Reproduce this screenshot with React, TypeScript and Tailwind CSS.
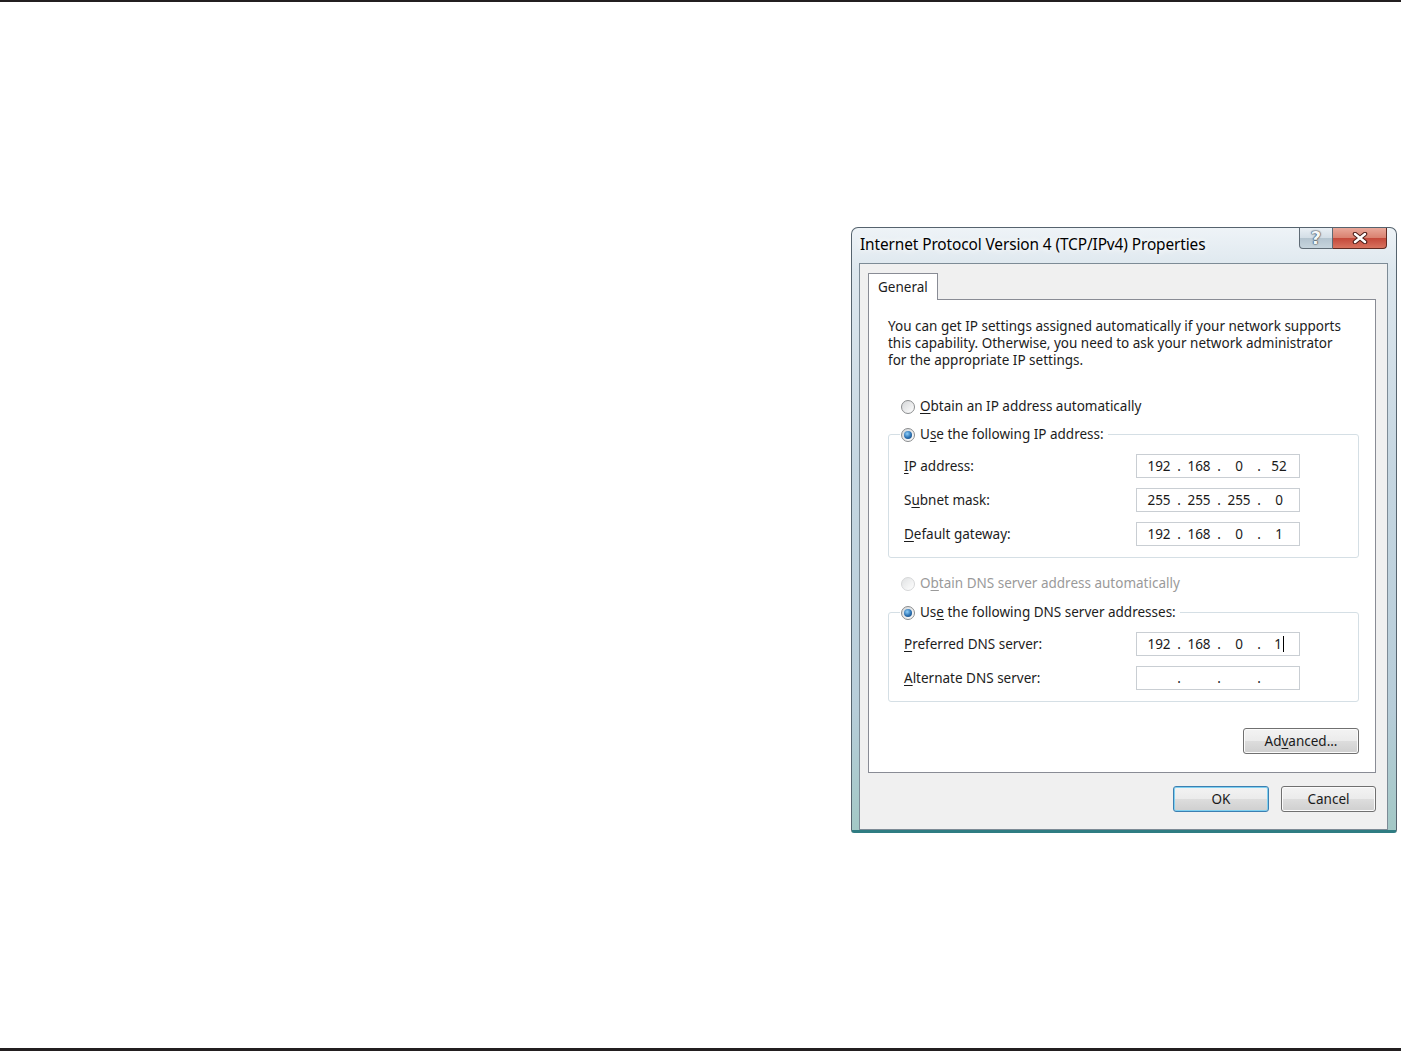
import React from "react";

const Radio = ({ checked, disabled }: { checked?: boolean; disabled?: boolean }) => (
  <span
    className={`flex h-[14px] w-[14px] shrink-0 items-center justify-center rounded-full border bg-[linear-gradient(135deg,#d4d6d8,#ffffff)] ${
      disabled ? "border-[#c4c6c8] opacity-70" : "border-[#8a8c8e]"
    }`}
  >
    {checked && (
      <span className="h-[8px] w-[8px] rounded-full bg-[radial-gradient(circle_at_40%_35%,#8fd0fb,#2a6fb0_55%,#143f6e)]" />
    )}
  </span>
);

const U = ({ children }: { children: React.ReactNode }) => <span className="underline underline-offset-2">{children}</span>;

const IpBox = ({ parts, caret }: { parts: string[]; caret?: boolean }) => (
  <div className="flex h-[24px] w-[164px] items-center border border-[#c9ced3] bg-white pl-[5px] text-[13.5px] text-[#1a1a1a]">
    {parts.map((p, i) => (
      <React.Fragment key={i}>
        <span className="w-[34px] text-center">
          {p}
          {caret && i === 3 && <span className="ml-[1px] inline-block h-[16px] w-px translate-y-[3px] bg-black" />}
        </span>
        {i < 3 && <span className="w-[6px] text-center">.</span>}
      </React.Fragment>
    ))}
  </div>
);

const Row = ({ label, parts, caret }: { label: React.ReactNode; parts: string[]; caret?: boolean }) => (
  <div className="flex h-[24px] items-center">
    <span className="w-[247px] pl-[15px] text-[13.5px]">{label}</span>
    <IpBox parts={parts} caret={caret} />
  </div>
);

const VistaButton = ({ children, primary, w }: { children: React.ReactNode; primary?: boolean; w: string }) => (
  <button
    className={`${w} relative h-[26px] overflow-hidden rounded-[3px] border text-[13.5px] text-[#1a1a1a] ${
      primary ? "border-[#3c7fb1] shadow-[inset_0_0_0_1px_#7fd0f0]" : "border-[#707070] shadow-[inset_0_0_0_1px_#fbfbfb]"
    } bg-[linear-gradient(180deg,#f3f3f3_0%,#ebebeb_49%,#dddddd_50%,#cfcfcf_100%)]`}
  >
    {children}
  </button>
);

export default function App() {
  return (
    <div className="flex h-[1051px] w-full flex-col bg-white font-['Noto_Sans',sans-serif] text-[#1c1c1c]">
      <div className="h-[2px] w-full bg-[#231f20]" />

      <div className="ml-[851px] mt-[225px] flex h-[606px] w-[546px] flex-col rounded-t-[7px] rounded-b-[3px] border border-[#55636e] border-b-[3px] border-b-[#2f7c82] bg-[linear-gradient(180deg,#eef3f7_0%,#dde7ee_7%,#c5d6e1_40%,#b7cdd9_80%,#a3c8c6_100%)]">
        {/* title bar */}
        <div className="flex h-[35px] items-start justify-between">
          <span className="pl-[8px] pt-[5px] text-[15.4px] tracking-[-0.1px] text-black [text-shadow:0_0_6px_#ffffff,0_0_10px_#ffffff]">
            Internet Protocol Version 4 (TCP/IPv4) Properties
          </span>
          <div className="mr-[9px] flex">
            <div className="flex h-[21px] w-[34px] items-center justify-center rounded-bl-[4px] border border-t-0 border-[#5f6b75] bg-[linear-gradient(180deg,#e9eff4_0%,#d2dde5_50%,#b4c4cf_51%,#c6d4dd_100%)] font-['DejaVu_Sans',sans-serif] text-[18px] leading-none font-bold text-[#f4f7f9] [text-shadow:0_0_1px_#3a4650,0_0_1px_#3a4650,0_0_2px_#3a4650]">
              ?
            </div>
            <div className="flex h-[21px] w-[54px] items-center justify-center rounded-br-[4px] border border-l-0 border-t-0 border-[#5f2a22] bg-[linear-gradient(180deg,#e9a89a_0%,#d9806f_50%,#c4483a_51%,#d8735f_100%)]">
              <svg width="16" height="12" viewBox="0 0 16 12">
                <path d="M3 2 L13 10 M13 2 L3 10" stroke="#4a1d18" strokeWidth="4.5" strokeLinecap="round" />
                <path d="M3 2 L13 10 M13 2 L3 10" stroke="#ffffff" strokeWidth="2.5" strokeLinecap="round" />
              </svg>
            </div>
          </div>
        </div>

        {/* client area */}
        <div className="ml-[7px] mr-[8px] flex flex-1 flex-col border border-[#7d8b96] bg-[#f0f0f0]">
          {/* tab strip */}
          <div className="ml-[8px] mt-[9px] flex">
            <div className="relative z-10 -mb-px flex h-[27px] w-[70px] items-center border border-b-0 border-[#898c95] bg-white pl-[9px] text-[13.5px]">
              General
            </div>
          </div>

          {/* tab panel */}
          <div className="ml-[8px] mr-[11px] flex h-[474px] flex-col border border-[#898c95] bg-white pl-[19px] pr-[16px]">
            <p className="mt-[18px] text-[13.5px] leading-[17px]">
              <span className="whitespace-nowrap">You can get IP settings assigned automatically if your network supports</span>
              <br />
              <span className="whitespace-nowrap">this capability. Otherwise, you need to ask your network administrator</span>
              <br />
              <span className="whitespace-nowrap">for the appropriate IP settings.</span>
            </p>

            <div className="mt-[29px] flex h-[17px] items-center gap-[5px] pl-[13px] text-[13.5px]">
              <Radio />
              <span>
                <U>O</U>btain an IP address automatically
              </span>
            </div>

            <fieldset className="mt-[11px] h-[132px] rounded-[3px] border border-[#d5dfe5]">
              <legend className="ml-[11px] flex h-[17px] items-center gap-[5px] pl-[1px] pr-[4px] text-[13.5px]">
                <Radio checked />
                <span>
                  U<U>s</U>e the following IP address:
                </span>
              </legend>
              <div className="mt-[11px] flex flex-col gap-[10px]">
                <Row label={<><U>I</U>P address:</>} parts={["192", "168", "0", "52"]} />
                <Row label={<>S<U>u</U>bnet mask:</>} parts={["255", "255", "255", "0"]} />
                <Row label={<><U>D</U>efault gateway:</>} parts={["192", "168", "0", "1"]} />
              </div>
            </fieldset>

            <div className="mt-[17px] flex h-[17px] items-center gap-[5px] pl-[13px] text-[13.5px] text-[#9a9a9a]">
              <Radio disabled />
              <span>
                O<U>b</U>tain DNS server address automatically
              </span>
            </div>

            <fieldset className="mt-[12px] h-[98px] rounded-[3px] border border-[#d5dfe5]">
              <legend className="ml-[11px] flex h-[17px] items-center gap-[5px] pl-[1px] pr-[4px] text-[13.5px]">
                <Radio checked />
                <span>
                  Us<U>e</U> the following DNS server addresses:
                </span>
              </legend>
              <div className="mt-[11px] flex flex-col gap-[10px]">
                <Row label={<><U>P</U>referred DNS server:</>} parts={["192", "168", "0", "1"]} caret />
                <Row label={<><U>A</U>lternate DNS server:</>} parts={["", "", "", ""]} />
              </div>
            </fieldset>

            <div className="mt-[26px] flex justify-end">
              <VistaButton w="w-[116px]">
                Ad<U>v</U>anced...
              </VistaButton>
            </div>
          </div>

          {/* dialog buttons */}
          <div className="mr-[11px] mt-[13px] flex justify-end gap-[12px]">
            <VistaButton primary w="w-[96px]">
              OK
            </VistaButton>
            <VistaButton w="w-[95px]">Cancel</VistaButton>
          </div>
        </div>
      </div>

      <div className="flex-1" />
      <div className="h-[3px] w-full bg-[#231f20]" />
    </div>
  );
}
